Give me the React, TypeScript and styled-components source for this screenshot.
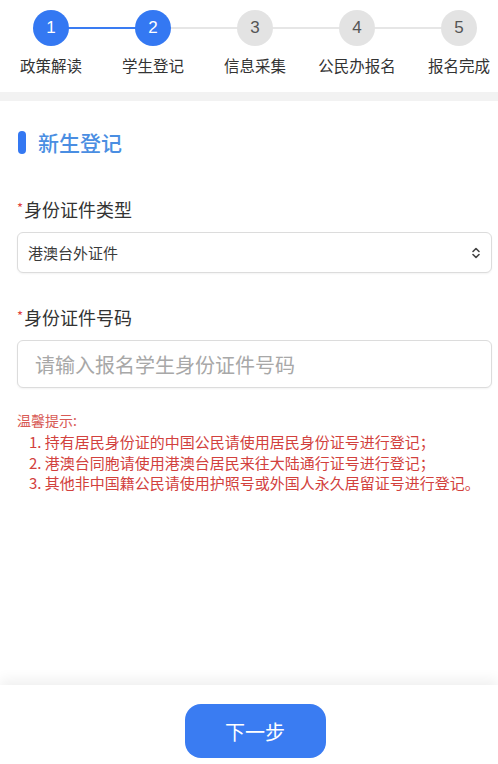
import React, { useState, ChangeEvent } from 'react';
import styled, { createGlobalStyle, css } from 'styled-components';

const GlobalStyle = createGlobalStyle`
  html, body {
    margin: 0;
    padding: 0;
    background: #ffffff;
  }
  body {
    font-family: "Noto Sans CJK SC", "Noto Sans", sans-serif;
    color: #333333;
  }
  * {
    box-sizing: border-box;
  }
`;

const Page = styled.div`
  height: 100vh;
  display: flex;
  flex-direction: column;
  overflow: hidden;
`;

const Main = styled.main`
  flex: 1;
`;

const Stepper = styled.div`
  display: grid;
  grid-template-columns: repeat(5, 102px);
  padding: 10px 0 16px;
  overflow: hidden;
`;

const Step = styled.div<{ $line?: 'on' | 'off' }>`
  position: relative;
  display: flex;
  flex-direction: column;
  align-items: center;
  gap: 8px;

  ${({ $line }) =>
    $line &&
    css`
      &::after {
        content: '';
        position: absolute;
        top: 17px;
        left: 50%;
        width: 102px;
        height: 2px;
        background: ${$line === 'on' ? '#3a7cf2' : '#e6e6e6'};
        z-index: 0;
      }
    `}
`;

const Circle = styled.div<{ $active: boolean }>`
  position: relative;
  z-index: 1;
  width: 36px;
  height: 36px;
  border-radius: 50%;
  display: flex;
  align-items: center;
  justify-content: center;
  font-family: "Liberation Sans", Arial, sans-serif;
  font-size: 17px;
  background: ${({ $active }) => ($active ? '#3478f2' : '#e3e3e3')};
  color: ${({ $active }) => ($active ? '#ffffff' : '#555555')};
`;

const StepLabel = styled.div`
  font-size: 15.5px;
  line-height: 22px;
  color: #333333;
  white-space: nowrap;
`;

const Band = styled.div`
  height: 9px;
  background: #f2f2f2;
`;

const Content = styled.div`
  padding: 0 6px 0 17px;
`;

const SectionHeader = styled.h2`
  margin: 29px 0 0 1px;
  display: flex;
  align-items: center;
  gap: 12px;
  font-size: 21px;
  line-height: 24px;
  font-weight: 500;
  color: #4a8ee2;

  &::before {
    content: '';
    width: 8px;
    height: 23px;
    border-radius: 4px;
    background: #3478f2;
  }
`;

const FieldLabel = styled.label<{ $top: number }>`
  display: block;
  margin-top: ${({ $top }) => $top}px;
  font-size: 18px;
  line-height: 22px;
  color: #333333;

  span {
    color: #e0433f;
    font-size: 13px;
    vertical-align: 4px;
    margin-right: 1px;
  }
`;

const boxStyle = css`
  display: flex;
  align-items: center;
  width: 100%;
  border: 1px solid #dcdcdc;
  border-radius: 6px;
  background: #ffffff;
  box-shadow: 0 1px 2px rgba(0, 0, 0, 0.05);
`;

const SelectBox = styled.div`
  ${boxStyle};
  margin-top: 12px;
  height: 41px;
  padding: 0 10px 0 10px;
  justify-content: space-between;
  font-size: 15px;
  color: #3a3a3a;
`;

const TextInput = styled.input`
  ${boxStyle};
  margin-top: 12px;
  height: 48px;
  padding: 0 17px;
  font-family: "Noto Sans CJK SC", sans-serif;
  font-size: 20px;
  color: #333333;
  outline: none;

  &::placeholder {
    color: #a8a8a8;
  }
`;

const Tips = styled.div`
  margin-top: 22px;
  color: #d2413d;
`;

const TipsTitle = styled.div`
  font-size: 14px;
  line-height: 20px;
  color: #d85a55;
`;

const TipsList = styled.ol`
  margin: 2px 0 0;
  padding: 0 0 0 12px;
  list-style: none;
`;

const TipItem = styled.li`
  font-size: 15px;
  line-height: 20.5px;
  white-space: nowrap;
`;

const Footer = styled.footer`
  height: 79px;
  display: flex;
  justify-content: center;
  padding: 19px 0 0 12px;
  background: #ffffff;
  box-shadow: 0 -6px 12px rgba(0, 0, 0, 0.06);
`;

const NextButton = styled.button`
  width: 141px;
  height: 54px;
  border: none;
  border-radius: 16px;
  background: #3a7cf2;
  color: #ffffff;
  font-family: "Noto Sans CJK SC", sans-serif;
  font-size: 20px;
  cursor: pointer;
`;

const steps = ['政策解读', '学生登记', '信息采集', '公民办报名', '报名完成'];
const current = 2;

const tips = [
  '1. 持有居民身份证的中国公民请使用居民身份证号进行登记；',
  '2. 港澳台同胞请使用港澳台居民来往大陆通行证号进行登记；',
  '3. 其他非中国籍公民请使用护照号或外国人永久居留证号进行登记。',
];

const App: React.FC = () => {
  const [idNumber, setIdNumber] = useState('');

  return (
    <>
      <GlobalStyle />
      <Page>
        <Main>
          <Stepper>
            {steps.map((label, i) => (
              <Step
                key={label}
                $line={i < steps.length - 1 ? (i + 1 < current ? 'on' : 'off') : undefined}
              >
                <Circle $active={i < current}>{i + 1}</Circle>
                <StepLabel>{label}</StepLabel>
              </Step>
            ))}
          </Stepper>
          <Band />
          <Content>
            <SectionHeader>新生登记</SectionHeader>

            <FieldLabel $top={43}>
              <span>*</span>身份证件类型
            </FieldLabel>
            <SelectBox>
              港澳台外证件
              <svg width="10" height="14" viewBox="0 0 10 14" fill="none" stroke="#444" strokeWidth="1.6" strokeLinecap="round" strokeLinejoin="round">
                <path d="M2 5.5 L5 2.5 L8 5.5" />
                <path d="M2 8.5 L5 11.5 L8 8.5" />
              </svg>
            </SelectBox>

            <FieldLabel $top={32}>
              <span>*</span>身份证件号码
            </FieldLabel>
            <TextInput
              placeholder="请输入报名学生身份证件号码"
              value={idNumber}
              onChange={(e: ChangeEvent<HTMLInputElement>) => setIdNumber(e.target.value)}
            />

            <Tips>
              <TipsTitle>温馨提示:</TipsTitle>
              <TipsList>
                {tips.map((t) => (
                  <TipItem key={t}>{t}</TipItem>
                ))}
              </TipsList>
            </Tips>
          </Content>
        </Main>
        <Footer>
          <NextButton type="button">下一步</NextButton>
        </Footer>
      </Page>
    </>
  );
};

export default App;
